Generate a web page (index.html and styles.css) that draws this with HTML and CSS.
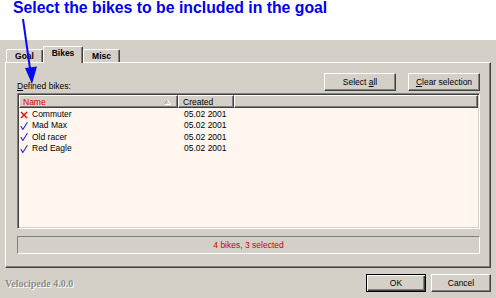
FILE: index.html
```html
<!DOCTYPE html>
<html lang="en">
<head>
  <meta charset="UTF-8">
  <title>Velocipede - Bikes</title>
  <link rel="stylesheet" href="styles.css">
</head>
<body>
  <div class="banner">
    <h1 class="title">Select the bikes to be included in the goal</h1>
  </div>

  <div class="dialog">
    <div class="tabs">
      <div class="tab tab-goal">Goal</div>
      <div class="tab tab-bikes tab-active">Bikes</div>
      <div class="tab tab-misc">Misc</div>
    </div>

    <div class="panel">
      <div class="toolbar">
        <div class="label"><u>D</u>efined bikes:</div>
        <div class="toolbar-buttons">
          <button class="btn">Select <u>a</u>ll</button>
          <button class="btn"><u>C</u>lear selection</button>
        </div>
      </div>

      <div class="list">
        <div class="list-head">
          <div class="col col-name">
            <span>Name</span>
            <svg class="sort" width="7" height="6" viewBox="0 0 7 6">
              <polyline points="0.5,5.5 3.5,0.5" fill="none" stroke="#a8a4a0" stroke-width="1"/>
              <polyline points="3.5,0.5 6.5,5.5 0.5,5.5" fill="none" stroke="#ffffff" stroke-width="1"/>
            </svg>
          </div>
          <div class="col col-date">Created</div>
          <div class="col col-rest"></div>
        </div>

        <div class="row">
          <div class="cell-name">
            <svg class="icon" width="8" height="8" viewBox="0 0 8 8">
              <path d="M1 1 L7 7 M7 1 L1 7" stroke="#e01818" stroke-width="1.5" fill="none"/>
            </svg>
            Commuter
          </div>
          <div class="cell-date">05.02 2001</div>
        </div>
        <div class="row">
          <div class="cell-name">
            <svg class="icon" width="8" height="8" viewBox="0 0 8 8">
              <path d="M0.8 4 L2.8 7.5 L7.4 0.3" stroke="#2a2ae0" stroke-width="1.1" fill="none"/>
            </svg>
            Mad Max
          </div>
          <div class="cell-date">05.02 2001</div>
        </div>
        <div class="row">
          <div class="cell-name">
            <svg class="icon" width="8" height="8" viewBox="0 0 8 8">
              <path d="M0.8 4 L2.8 7.5 L7.4 0.3" stroke="#2a2ae0" stroke-width="1.1" fill="none"/>
            </svg>
            Old racer
          </div>
          <div class="cell-date">05.02 2001</div>
        </div>
        <div class="row">
          <div class="cell-name">
            <svg class="icon" width="8" height="8" viewBox="0 0 8 8">
              <path d="M0.8 4 L2.8 7.5 L7.4 0.3" stroke="#2a2ae0" stroke-width="1.1" fill="none"/>
            </svg>
            Red Eagle
          </div>
          <div class="cell-date">05.02 2001</div>
        </div>
      </div>

      <div class="status">4 bikes, 3 selected</div>
    </div>
  </div>

  <div class="footer">
    <div class="version">Velocipede 4.0.0</div>
    <div class="footer-buttons">
      <button class="btn btn-footer btn-default">OK</button>
      <button class="btn btn-footer">Cancel</button>
    </div>
  </div>

  <!-- callout arrow drawn over the dialog -->
  <svg class="arrow" width="496" height="298" viewBox="0 0 496 298">
    <line x1="23" y1="19" x2="30.2" y2="70" stroke="#0a0af0" stroke-width="2"/>
    <polygon points="25,68 37,66.5 32,84" fill="#0a0af0"/>
  </svg>
</body>
</html>
```

FILE: styles.css
```css
body {
  margin: 0;
  width: 496px;
  height: 298px;
  position: relative;
  overflow: hidden;
  font-family: "Liberation Sans", Arial, sans-serif;
  font-size: 8.5px;
  background-color: #d4d0c8;
  color: #000;
}
.banner {
  height: 40px;
  background-color: #fff;
}
.title {
  margin: 0;
  padding-left: 13px;
  font-size: 15.8px;
  line-height: 16px;
  font-weight: bold;
  color: #0000f0;
}
.dialog {
  padding: 5px 5px 0;
}
.tabs {
  display: flex;
  align-items: flex-end;
  height: 17px;
  padding-left: 1px;
}
.tab {
  box-sizing: border-box;
  height: 13px;
  border-top: 1px solid #fff;
  border-left: 1px solid #fff;
  border-right: 1px solid #404040;
  border-radius: 2px 2px 0 0;
  box-shadow: inset -1px 0 #808080;
  font-weight: bold;
  text-align: center;
  line-height: 12px;
}
.tab-goal {
  width: 37px;
}
.tab-bikes {
  width: 40px;
}
.tab-misc {
  width: 37px;
}
.tab-active {
  height: 17px;
  margin-bottom: -1px;
  position: relative;
  z-index: 1;
  background-color: #d4d0c8;
}
.panel {
  box-sizing: border-box;
  height: 206px;
  border: 1px solid;
  border-color: #fff #404040 #404040 #fff;
  box-shadow: inset -1px -1px #808080;
  padding: 10px 10px 0 11px;
}
.toolbar {
  display: flex;
  justify-content: space-between;
  align-items: flex-end;
  height: 18px;
}
.label {
  line-height: 10px;
}
.toolbar-buttons {
  display: flex;
  gap: 12px;
}
.btn {
  box-sizing: border-box;
  width: 72px;
  height: 18px;
  padding: 0;
  font-family: inherit;
  font-size: 8.5px;
  color: #000;
  background-color: #d4d0c8;
  border: 1px solid;
  border-color: #fff #404040 #404040 #fff;
  box-shadow: inset -1px -1px #808080;
}
.list {
  box-sizing: border-box;
  height: 136px;
  margin-top: 2px;
  padding: 1px;
  background-color: #fef6ef;
  border: 1px solid;
  border-color: #808080 #fff #fff #808080;
  box-shadow: inset 1px 1px #404040, inset -1px -1px #d4d0c8;
}
.list-head {
  display: flex;
  height: 13px;
  margin-bottom: 1px;
}
.col {
  box-sizing: border-box;
  height: 13px;
  border: 1px solid;
  border-color: #fff #404040 #404040 #fff;
  box-shadow: inset -1px -1px #808080;
  background-color: #d4d0c8;
  line-height: 12px;
}
.col-name {
  width: 159px;
  display: flex;
  align-items: center;
  justify-content: space-between;
  padding: 0 6px 0 3px;
  color: #e00000;
}
.sort {
  display: block;
}
.col-date {
  width: 56px;
  padding-left: 4px;
}
.col-rest {
  flex: 1;
}
.row {
  display: flex;
  height: 11.4px;
  line-height: 11.4px;
}
.cell-name {
  width: 159px;
  display: flex;
  align-items: center;
  padding-left: 1px;
  box-sizing: border-box;
}
.icon {
  margin-right: 4px;
}
.cell-date {
  padding-left: 6px;
}
.status {
  box-sizing: border-box;
  height: 18px;
  margin-top: 7px;
  border: 1px solid;
  border-color: #808080 #fff #fff #808080;
  text-align: center;
  line-height: 16px;
  color: #d00000;
}
.footer {
  display: flex;
  justify-content: space-between;
  align-items: center;
  height: 30px;
  padding: 0 5px;
}
.version {
  font-family: "Liberation Serif", "Times New Roman", serif;
  font-weight: bold;
  font-size: 10px;
  color: #8c8c8c;
  text-shadow: 1px 1px #fff;
}
.footer-buttons {
  display: flex;
  gap: 5px;
}
.btn-footer {
  width: 60px;
}
.btn-default {
  border-color: #000;
  box-shadow: inset 1px 1px #fff, inset -1px -1px #404040, inset -2px -2px #808080;
}
.arrow {
  position: absolute;
  top: 0;
  left: 0;
  pointer-events: none;
}
```
